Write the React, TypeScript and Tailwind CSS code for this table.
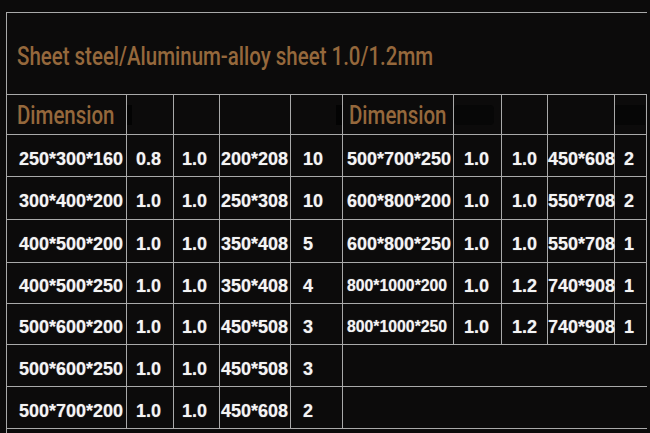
import React from "react"

type Row = [string, string, string, string, string]

const leftRows: Row[] = [
  ["250*300*160", "0.8", "1.0", "200*208", "10"],
  ["300*400*200", "1.0", "1.0", "250*308", "10"],
  ["400*500*200", "1.0", "1.0", "350*408", "5"],
  ["400*500*250", "1.0", "1.0", "350*408", "4"],
  ["500*600*200", "1.0", "1.0", "450*508", "3"],
  ["500*600*250", "1.0", "1.0", "450*508", "3"],
  ["500*700*200", "1.0", "1.0", "450*608", "2"],
]

const rightRows: Row[] = [
  ["500*700*250", "1.0", "1.0", "450*608", "2"],
  ["600*800*200", "1.0", "1.0", "550*708", "2"],
  ["600*800*250", "1.0", "1.0", "550*708", "1"],
  ["800*1000*200", "1.0", "1.2", "740*908", "1"],
  ["800*1000*250", "1.0", "1.2", "740*908", "1"],
]

const leftPad = ["pl-[12px]", "pl-[9px]", "pl-[8px]", "pl-[1px]", "pl-[12px]"]
const rightPad = ["pl-[4px]", "pl-[10px]", "pl-[10px]", "pl-[0px]", "pl-[9px]"]

const line = "border-[#a9a9a9]"
const cell = `flex items-center pt-[6px] border-r border-b ${line} whitespace-nowrap overflow-visible`
const num =
  "leading-none font-bold text-[#f4f4f4] [font-family:'Liberation_Sans',Arial,sans-serif] [text-shadow:0_0_1px_rgba(255,255,255,0.5)]"

function Condensed({ children }: { children: React.ReactNode }) {
  return (
    <span className="inline-block origin-left scale-x-[0.787] whitespace-nowrap leading-none text-[26px] font-medium text-[#95683c] [font-family:Roboto,'Noto_Sans',sans-serif]">
      {children}
    </span>
  )
}

function Cells({ row, pads, small }: { row: Row; pads: string[]; small?: boolean }) {
  return (
    <>
      {row.map((v, i) => (
        <div key={i} className={`${cell} ${pads[i]}`}>
          <span className={`${num} ${small && i === 0 ? "text-[15.8px]" : "text-[18px]"}`}>{v}</span>
        </div>
      ))}
    </>
  )
}

export default function App() {
  return (
    <div className="w-[650px] h-[433px] bg-[#0c0b0b] overflow-hidden pt-[12px] pl-[6px]">
      <div className={`w-[641px] h-[421px] border-l border-t ${line}`}>
        <div className="h-[81px] flex items-center pt-[4px] pl-[10px]">
          <Condensed>Sheet steel/Aluminum-alloy sheet 1.0/1.2mm</Condensed>
        </div>

        <div
          className={`grid border-t ${line} grid-cols-[120px_47px_46px_71px_52px_111px_48px_46px_67px_32px] grid-rows-[40px_42px_43px_43px_41px_41px_42px_42px]`}
        >
          {/* header */}
          <div className={`flex items-center pt-[1px] pl-[10px] border-r border-b ${line}`}>
            <Condensed>Dimension</Condensed>
          </div>
          <div className={`flex items-center border-r border-b ${line}`}>
            <div className="w-[5px] h-[20px] bg-[#030303]" />
          </div>
          <div className={`border-r border-b ${line}`} />
          <div className={`border-r border-b ${line}`} />
          <div className={`flex items-center justify-end border-r border-b ${line}`}>
            <div className="w-[6px] h-[20px] bg-[#030303]" />
          </div>
          <div className={`flex items-center pt-[1px] pl-[6px] border-r border-b ${line}`}>
            <Condensed>Dimension</Condensed>
          </div>
          <div className={`flex items-center border-r border-b ${line}`}>
            <div className="w-[40px] h-[20px] bg-[#070707] rounded-sm" />
          </div>
          <div className={`border-r border-b ${line}`} />
          <div className={`border-r border-b ${line}`} />
          <div className={`flex items-center border-r border-b ${line}`}>
            <div className="w-[30px] h-[20px] bg-[#060606]" />
          </div>

          {leftRows.map((row, r) => (
            <React.Fragment key={r}>
              <Cells row={row} pads={leftPad} />
              {r < rightRows.length ? (
                <Cells row={rightRows[r]} pads={rightPad} small={r >= 3} />
              ) : (
                <div className={`col-span-5 border-b ${line}`} />
              )}
            </React.Fragment>
          ))}
        </div>
      </div>
    </div>
  )
}
